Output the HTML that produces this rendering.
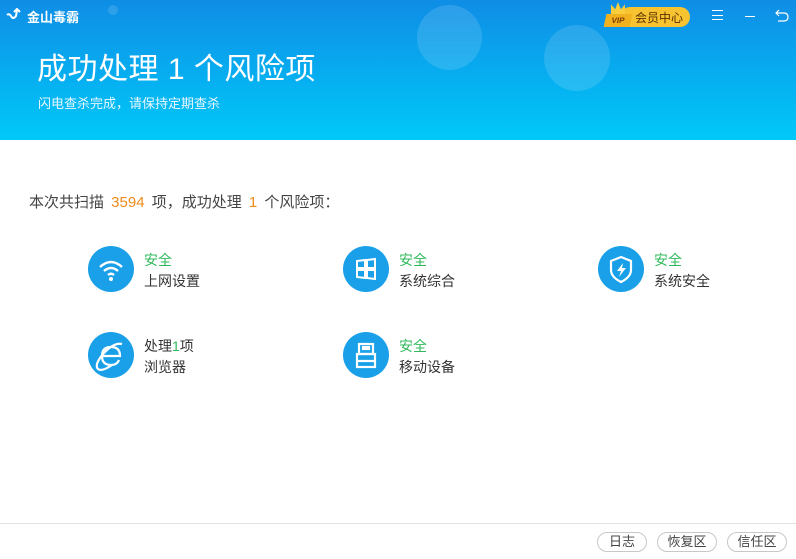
<!DOCTYPE html>
<html><head><meta charset="utf-8"><style>
*{margin:0;padding:0;box-sizing:border-box}
body{width:796px;height:559px;overflow:hidden;background:#fff;font-family:"Liberation Sans","Noto Sans CJK SC",sans-serif;position:relative;color:#333}
.hd{position:absolute;left:0;top:0;width:796px;height:140px;background:linear-gradient(#0f8de6,#00c9f8);overflow:hidden}
.bub{position:absolute;border-radius:50%;background:rgba(255,255,255,0.13)}
.abs{position:absolute;white-space:nowrap}
.ic{position:absolute;width:46px;height:46px;border-radius:50%;background:#1aa0e8}
.ic svg{position:absolute;left:0;top:0}
.g{color:#2fb95a;font-size:14px}
.t{font-size:14px;color:#333}
.ft{position:absolute;left:0;top:523px;width:796px;height:36px;border-top:1px solid #e2e2e2;background:#fff}
.btn{position:absolute;top:532px;height:20px;border:1px solid #c8c8c8;border-radius:10px;font-size:13px;color:#444;text-align:center;line-height:18px}
</style></head><body>
<div class="hd">
<div class="bub" style="left:417px;top:5px;width:65px;height:65px"></div>
<div class="bub" style="left:544px;top:25px;width:66px;height:66px"></div>
<div class="bub" style="left:108px;top:5px;width:10px;height:10px"></div>
<svg class="abs" style="left:5px;top:8px" width="18" height="16" viewBox="0 0 18 16"><path d="M2 7 Q4 5 6 8 Q8 12 11 8 L12 2 M9 4 L12 1 L15 4" stroke="#fff" stroke-width="2" fill="none"/></svg>
<div class="abs" style="left:27px;top:7px;font-size:13px;color:#fff;font-weight:bold">金山毒霸</div>
<div class="abs" style="left:37px;top:44px;font-size:30px;color:#fff;letter-spacing:0.5px">成功处理 1 个风险项</div>
<div class="abs" style="left:38px;top:93px;font-size:13px;color:#e8f6ff">闪电查杀完成，请保持定期查杀</div>
<div class="abs" style="left:620px;top:7px;width:70px;height:20px;border-radius:10px;background:#f7c331"></div>
<div class="abs" style="left:605px;top:14px;width:26px;height:13px;background:#f2b21f;transform:skewX(-12deg);font-size:8px;font-weight:bold;color:#7a3b00;text-align:center;line-height:13px">VIP</div>
<div class="abs" style="left:611px;top:2px;width:14px;height:12px;background:#f9cd3b;clip-path:polygon(0 100%,0 20%,30% 60%,50% 0,70% 60%,100% 20%,100% 100%)"></div>
<div class="abs" style="left:635px;top:9px;font-size:12px;color:#5a3000">会员中心</div>
<div class="abs" style="left:712px;top:10px;width:11px;height:10px;border-top:1px solid #fff;border-bottom:1px solid #fff"></div>
<div class="abs" style="left:712px;top:15px;width:11px;height:1px;background:#fff"></div>
<div class="abs" style="left:745px;top:16px;width:10px;height:1px;background:#fff"></div>
<svg class="abs" style="left:775px;top:9px" width="14" height="13" viewBox="0 0 14 13"><path d="M4 1 L1 4 L4 7 M1 4 H9 Q13 4 13 8 Q13 12 9 12 H3" stroke="#fff" stroke-width="1.2" fill="none"/></svg>
</div>
<div class="abs" style="left:29px;top:191px;font-size:15px;color:#444;word-spacing:3px">本次共扫描 <span style="color:#f08a1c">3594</span> 项，成功处理 <span style="color:#f08a1c">1</span> 个风险项：</div>

<div class="ic" style="left:88px;top:246px"><svg width="46" height="46" viewBox="0 0 46 46" fill="none" stroke="#fff" stroke-width="2.4"><path d="M12 21 Q23 11 34 21"/><path d="M16 25 Q23 19 30 25"/><path d="M20 29 Q23 26.5 26 29"/><circle cx="23" cy="33" r="2" fill="#fff" stroke="none"/></svg></div>
<div class="abs g" style="left:144px;top:250px">安全</div><div class="abs t" style="left:144px;top:271px">上网设置</div>

<div class="ic" style="left:343px;top:246px"><svg width="46" height="46" viewBox="0 0 46 46" fill="#fff"><path d="M14 15 L22 14 V22 H14 Z M24 14 L32 13 V22 H24 Z M14 24 H22 V32 L14 31 Z M24 24 H32 V33 L24 32 Z" fill="none" stroke="#fff" stroke-width="2"/></svg></div>
<div class="abs g" style="left:399px;top:250px">安全</div><div class="abs t" style="left:399px;top:271px">系统综合</div>

<div class="ic" style="left:598px;top:246px"><svg width="46" height="46" viewBox="0 0 46 46" fill="none" stroke="#fff" stroke-width="2.2"><path d="M23 11 L33 15 V24 Q33 31 23 36 Q13 31 13 24 V15 Z"/><path d="M25 17 L19 25 H23 L21 31 L28 22 H24 Z" fill="#fff" stroke="none"/></svg></div>
<div class="abs g" style="left:654px;top:250px">安全</div><div class="abs t" style="left:654px;top:271px">系统安全</div>

<div class="ic" style="left:88px;top:332px"><svg width="46" height="46" viewBox="0 0 46 46" fill="none" stroke="#fff" stroke-width="2.2"><path d="M14 24 H32 Q32 15 23 15 Q14 15 14 24 Q14 33 23 33 Q29 33 31 28"/><path d="M34 12 Q26 10 15 22 Q6 33 10 37 Q14 40 24 33"/></svg></div>
<div class="abs t" style="left:144px;top:336px">处理<span style="color:#2fb95a">1</span>项</div><div class="abs t" style="left:144px;top:357px">浏览器</div>

<div class="ic" style="left:343px;top:332px"><svg width="46" height="46" viewBox="0 0 46 46" fill="none" stroke="#fff" stroke-width="2.2"><rect x="16" y="12" width="14" height="10"/><rect x="14" y="22" width="18" height="13"/><path d="M14 29 H32"/><rect x="20" y="15" width="2" height="2" fill="#fff"/><rect x="24" y="15" width="2" height="2" fill="#fff"/></svg></div>
<div class="abs g" style="left:399px;top:336px">安全</div><div class="abs t" style="left:399px;top:357px">移动设备</div>

<div class="ft"></div>
<div class="btn" style="left:597px;width:50px">日志</div>
<div class="btn" style="left:657px;width:60px">恢复区</div>
<div class="btn" style="left:727px;width:60px">信任区</div>
</body></html>
